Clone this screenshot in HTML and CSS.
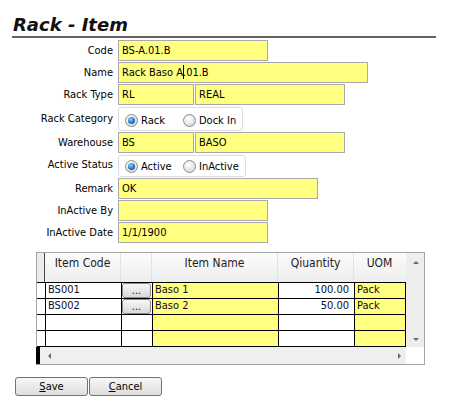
FILE: index.html
```html
<!DOCTYPE html>
<html>
<head>
<meta charset="utf-8">
<link rel="stylesheet" href="styles.css">
</head>
<body>
<div class="page">
  <h1 class="title">Rack - Item</h1>
  <div class="rule"></div>

  <div class="form">
    <div class="row"><div class="lbl">Code</div><div class="field w150">BS-A.01.B</div></div>
    <div class="row"><div class="lbl">Name</div><div class="field w250">Rack Baso A<span class="caret"></span>.01.B</div></div>
    <div class="row"><div class="lbl">Rack Type</div><div class="field w76">RL</div><div class="field w150 ml1">REAL</div></div>
    <div class="row row-cat"><div class="lbl">Rack Category</div>
      <div class="radios w125">
        <div class="opt"><span class="radio on"></span>Rack</div>
        <div class="opt"><span class="radio"></span>Dock In</div>
      </div>
    </div>
    <div class="row"><div class="lbl">Warehouse</div><div class="field w76">BS</div><div class="field w150 ml1">BASO</div></div>
    <div class="row row-status"><div class="lbl">Active Status</div>
      <div class="radios w128">
        <div class="opt"><span class="radio on"></span>Active</div>
        <div class="opt"><span class="radio"></span>InActive</div>
      </div>
    </div>
    <div class="row"><div class="lbl">Remark</div><div class="field w200">OK</div></div>
    <div class="row"><div class="lbl">InActive By</div><div class="field w150"></div></div>
    <div class="row"><div class="lbl">InActive Date</div><div class="field w150">1/1/1900</div></div>
  </div>

  <div class="grid">
    <div class="grid-main">
      <div class="g-head">
        <div class="rh"></div>
        <div class="hc c-code">Item Code</div>
        <div class="hc c-btn"></div>
        <div class="hc c-name">Item Name</div>
        <div class="hc c-qty">Qiuantity</div>
        <div class="hc c-uom">UOM</div>
      </div>
      <div class="g-row">
        <div class="rh"></div>
        <div class="dc c-code">BS001</div>
        <div class="dc c-btn"><span class="dots">...</span></div>
        <div class="dc c-name yl">Baso 1</div>
        <div class="dc c-qty num">100.00</div>
        <div class="dc c-uom yl">Pack</div>
      </div>
      <div class="g-row">
        <div class="rh"></div>
        <div class="dc c-code">BS002</div>
        <div class="dc c-btn"><span class="dots">...</span></div>
        <div class="dc c-name yl">Baso 2</div>
        <div class="dc c-qty num">50.00</div>
        <div class="dc c-uom yl">Pack</div>
      </div>
      <div class="g-row">
        <div class="rh"></div>
        <div class="dc c-code"></div>
        <div class="dc c-btn"></div>
        <div class="dc c-name yl"></div>
        <div class="dc c-qty num"></div>
        <div class="dc c-uom yl"></div>
      </div>
      <div class="g-row last">
        <div class="rh"></div>
        <div class="dc c-code"></div>
        <div class="dc c-btn"></div>
        <div class="dc c-name yl"></div>
        <div class="dc c-qty num"></div>
        <div class="dc c-uom yl"></div>
      </div>
      <div class="hscroll">
        <div class="blk"></div>
        <div class="hbar"><span class="arr-l"></span><span class="arr-r"></span></div>
      </div>
    </div>
    <div class="vcol">
      <div class="vscroll"><span class="arr-u"></span><span class="arr-d"></span></div>
      <div class="corner"></div>
    </div>
  </div>

  <div class="actions">
    <div class="btn"><u>S</u>ave</div>
    <div class="btn"><u>C</u>ancel</div>
  </div>
</div>
</body>
</html>
```

FILE: styles.css
```css
* { box-sizing: border-box; }
html, body { margin: 0; padding: 0; background: #ffffff; }
body {
  font-family: "DejaVu Sans Condensed", "DejaVu Sans", sans-serif;
  font-stretch: condensed;
  font-size: 11px;
  color: #000;
}
.page { width: 450px; height: 400px; overflow: hidden; }

.title {
  margin: 14px 0 0 13px;
  height: 21px;
  line-height: 21px;
  font-family: "DejaVu Sans", sans-serif;
  font-stretch: normal;
  font-size: 18px;
  font-weight: bold;
  font-style: italic;
  color: #111;
}
.rule {
  margin: 1px 0 0 12px;
  width: 424px;
  height: 2px;
  background: #626262;
}

.form { margin-top: 2px; display: flex; flex-direction: column; }
.row { display: flex; align-items: flex-start; height: 22px; }
.row-cat { height: 26px; }
.row-status { height: 24px; }
.lbl {
  width: 113px;
  margin-right: 5px;
  text-align: right;
  height: 21px;
  line-height: 21px;
  white-space: nowrap;
}
.row-cat .lbl { height: 25px; line-height: 25px; }
.row-status .lbl { height: 22px; line-height: 21px; }

.field {
  height: 21px;
  line-height: 19px;
  border: 1px solid #a8a8ae;
  background: #ffff80;
  padding-left: 3px;
  white-space: nowrap;
}
.w76 { width: 76px; }
.w125 { width: 125px; }
.w128 { width: 128px; }
.w150 { width: 150px; }
.w200 { width: 200px; }
.w250 { width: 250px; }
.ml1 { margin-left: 1px; }
.caret {
  display: inline-block;
  width: 1px;
  height: 14px;
  background: #000;
  vertical-align: -3px;
  margin-right: -1px;
}

.radios {
  display: flex;
  align-items: center;
  border: 1px solid #dcdcdc;
  border-radius: 3px;
  padding-left: 6px;
  background: #fff;
}
.row-cat .radios { height: 24px; margin-top: 1px; padding-top: 2px; }
.row-status .radios { height: 22px; margin-top: 1px; padding-top: 1px; }
.opt { display: flex; align-items: center; white-space: nowrap; }
.opt:first-child { width: 58px; }
.radio {
  width: 13px;
  height: 13px;
  border-radius: 50%;
  border: 1px solid #8c8c8c;
  background: radial-gradient(circle at 40% 35%, #ffffff 0%, #e6e6e6 55%, #c8c8c8 100%);
  margin-right: 3px;
  display: flex;
  align-items: center;
  justify-content: center;
}
.radio.on::after {
  content: "";
  width: 7px;
  height: 7px;
  border-radius: 50%;
  background: radial-gradient(circle at 40% 35%, #8fd0ff 0%, #1f78c8 55%, #0a3f7a 100%);
}

.grid {
  margin: 8px 0 0 36px;
  width: 389px;
  height: 113px;
  border: 1px solid #a4a4a4;
  display: flex;
}
.grid-main { width: 369px; display: flex; flex-direction: column; }
.g-head, .g-row { display: flex; }
.g-head { height: 29px; background: linear-gradient(#fbfbfb, #eeeeee); }
.g-head .rh { width: 8px; background: #ececec; border-right: 1px solid #4a4a4a; }
.hc {
  border-left: 1px solid #ffffff;
  text-align: center;
  padding-top: 3px;
  line-height: 14px;
  font-size: 12px;
  color: #222;
}
.g-head .c-code { border-left: none; width: 75px; }
.c-code { width: 76px; }
.c-btn { width: 31px; }
.c-name { width: 126px; }
.c-qty { width: 76px; }
.c-uom { width: 52px; }
.g-head .hc { border-left-color: #dedede; }
.g-head .c-btn, .g-head .c-name, .g-head .c-qty, .g-head .c-uom { border-left: 1px solid #e2e2e2; }

.g-row { height: 16px; }
.g-row.last { height: 17px; }
.g-row .rh { width: 8px; border-top: 1px solid #000; background: #fff; }
.g-row.last .rh, .g-row.last .dc { border-bottom: 1px solid #000; }
.dc {
  border-left: 1px solid #000;
  border-top: 1px solid #000;
  line-height: 14px;
  padding-left: 2px;
  white-space: nowrap;
  overflow: hidden;
  color: #0d0d2a;
  background: #fff;
}
.dc.c-uom { border-right: 1px solid #000; }
.dc.yl { background: #ffff80; }
.dc.num { text-align: right; padding-right: 5px; padding-left: 0; }
.dc.c-btn { padding: 0 0 0 0; }
.dots {
  display: block;
  margin: 0 0 0 0;
  width: 29px;
  height: 15px;
  border: 1px solid #8a8a8a;
  border-radius: 3px;
  background: linear-gradient(#f7f7f7, #d9d9d9);
  text-align: center;
  line-height: 14px;
  font-size: 11px;
  color: #111;
}

.hscroll { display: flex; height: 17px; }
.blk { width: 4px; background: #000; margin-left: -1px; }
.hbar {
  flex: 1;
  background: #efefef;
  display: flex;
  align-items: center;
  justify-content: space-between;
  padding: 0 5px 0 8px;
}
.arr-l, .arr-r, .arr-u, .arr-d { width: 0; height: 0; display: block; }
.arr-l { border-top: 3px solid transparent; border-bottom: 3px solid transparent; border-right: 3px solid #6a6a6a; }
.arr-r { border-top: 3px solid transparent; border-bottom: 3px solid transparent; border-left: 3px solid #6a6a6a; }
.arr-u { border-left: 3px solid transparent; border-right: 3px solid transparent; border-bottom: 3px solid #6a6a6a; }
.arr-d { border-left: 3px solid transparent; border-right: 3px solid transparent; border-top: 3px solid #6a6a6a; }

.vcol { width: 18px; display: flex; flex-direction: column; }
.vscroll {
  height: 94px;
  background: #eeeeee;
  display: flex;
  flex-direction: column;
  align-items: center;
  justify-content: space-between;
  padding: 8px 0 6px 1px;
}
.corner { flex: 1; background: #fff; }

.actions { display: flex; gap: 1px; margin: 12px 0 0 15px; }
.btn {
  width: 73px;
  height: 19px;
  border: 1px solid #727272;
  border-radius: 3px;
  background: linear-gradient(#f7f7f7, #dedede);
  text-align: center;
  line-height: 17px;
  font-size: 11px;
  color: #000;
}
.btn u { text-decoration: underline; }
```
